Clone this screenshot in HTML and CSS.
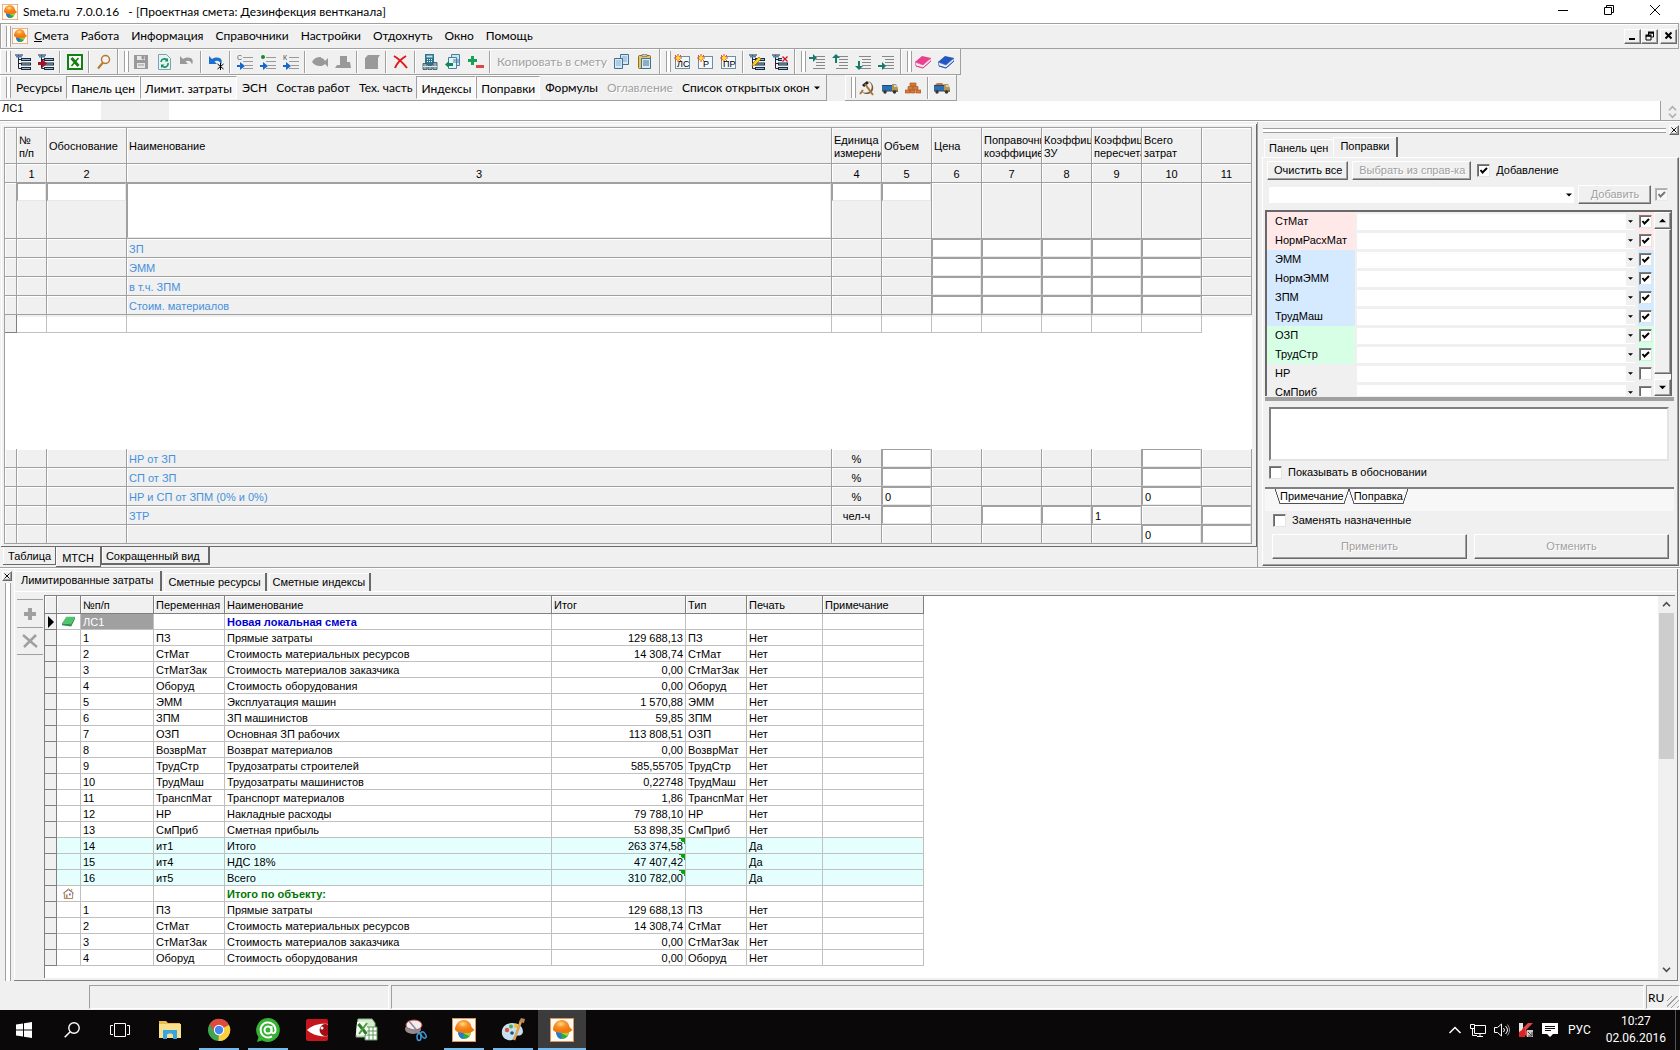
FILE: index.html
```html
<!DOCTYPE html>
<html lang="ru">
<head>
    <meta charset="UTF-8">
    <meta name="viewport" content="width=device-width, initial-scale=1.0">
    <title>Smeta.ru 7.0.0.16 - [Проектная смета: Дезинфекция вентканала]</title>
    <link rel="stylesheet" href="styles.css">
</head>
<body>
    <!-- Icon sprite -->
    <svg class="sprite" aria-hidden="true">
        <defs>
            <radialGradient id="helmet" cx="40%" cy="30%"><stop offset="0" stop-color="#ffe08a"/><stop offset=".5" stop-color="#f9932a"/><stop offset="1" stop-color="#f07a10"/></radialGradient>
        </defs>
        <symbol id="i-logo" viewBox="0 0 24 24"><rect x=".5" y=".5" width="23" height="23" fill="#fffaf4" stroke="#e0935a"/><path d="M6 13h13c0 5-3 8-7 8s-6-3-6-8z" fill="#2fa84a"/><path d="M6 13h6l-1 8c-3-1-5-4-5-8z" fill="#2678d8"/><path d="M11 15l8-1c0 2-1 3-2 4z" fill="#a8d233"/><path d="M3 12C3 6 7 2 12 2c4 0 7 3 7.500 7l3 3c-3 3-6 3-9 3-4 0-8 0-10.500-3z" fill="url(#helmet)"/></symbol>
        <symbol id="i-tree" viewBox="0 0 16 16"><path d="M0 1h8M3.500 1v13.500M3.500 5.500H7M3.500 9.500H7M3.500 14.500H7" stroke="#223" fill="none"/><path d="M1 1.500h6v2H1z" fill="#4a86b8"/><path d="M6 4h10v3H6zM6 8.500h10v3H6zM6 13h10v3H6z" fill="#1a2a38"/><path d="M7 5.500h8M7 10h8M7 14.500h8" stroke="#8fbbd8"/></symbol>
        <symbol id="i-arrow-red" viewBox="0 0 16 16"><path d="M0 8h4V5l5 4.500L4 14v-3H0z" fill="#a80f2a"/></symbol>
        <symbol id="i-pencil" viewBox="0 0 16 16"><path d="M3 12l1-3 6-6 2 2-6 6z" fill="#ffd21f" stroke="#a06a00" stroke-width=".7"/></symbol>
        <symbol id="i-cross" viewBox="0 0 16 16"><path d="M10 2h6v6h-6z" fill="#f0f0f0"/><path d="M10.500 2.500l5 5M15.500 2.500l-5 5" stroke="#d01020" stroke-width="1.300"/></symbol>
        <symbol id="i-excel" viewBox="0 0 16 16"><rect x="1" y="1" width="14" height="14" fill="#fff" stroke="#128012" stroke-width="2"/><path d="M4.500 4l7 8" stroke="#128012" stroke-width="3"/><path d="M11.500 4l-7 8" stroke="#128012" stroke-width="1.600"/></symbol>
        <symbol id="i-find" viewBox="0 0 16 16"><circle cx="9.500" cy="5.500" r="4" fill="#f3f3f3" stroke="#b5782c" stroke-width="1.500"/><path d="M7 8.500l-5 6" stroke="#b5782c" stroke-width="2"/></symbol>
        <symbol id="i-save" viewBox="0 0 16 16"><path d="M1 1h14v14H1z" fill="#999"/><path d="M4 2h8v4H4zM4 9h8v5H4z" fill="#e6e6e6"/><path d="M9 2h2v3H9zM5 11h6" fill="#999" stroke="#999"/></symbol>
        <symbol id="i-refresh" viewBox="0 0 16 16"><path d="M2.500.5h8l4 4v11h-12z" fill="#e6f2f6" stroke="#7da1ae"/><path d="M5 8a3.500 3.500 0 0 1 6-2M12 9a3.500 3.500 0 0 1-6 3" stroke="#139454" stroke-width="1.600" fill="none"/><path d="M12 4v3.500H8.500zM5 14v-3.500h3.500z" fill="#139454"/></symbol>
        <symbol id="i-undo" viewBox="0 0 16 16"><path d="M1 2v8h8L6.500 7.500C9 6 12 6.500 13 10.500c3-6-3-9-9-5.500z" fill="currentColor"/></symbol>
        <symbol id="i-lines" viewBox="0 0 16 16"><path d="M6 3.500h10M6 7.500h10M8 11.500h8M6 14.500h10" stroke="#999"/><path d="M0 11h3V8l5 4-5 4v-3H0z" fill="#1766c9"/></symbol>
        <symbol id="i-fish" viewBox="0 0 16 16"><path d="M0 8c2-4 5-5 9-5v1c2 0 3 1 4 3l3-3v9l-3-3c-2 3-10 3-13-2z" fill="#999"/></symbol>
        <symbol id="i-hat" viewBox="0 0 16 16"><path d="M5 2h7v6h3l1 6H0l2-3h3z" fill="#999"/></symbol>
        <symbol id="i-scroll" viewBox="0 0 16 16"><path d="M4 1h12l-2 3v11H1V4z" fill="#999"/></symbol>
        <symbol id="i-delete" viewBox="0 0 16 16"><path d="M1 2c5 3 9 7 13 12M13 2C8 5 4 9 2 14" stroke="#e01818" stroke-width="2" fill="none"/></symbol>
        <symbol id="i-calc" viewBox="0 0 16 16"><path d="M3 0h9v11H3z" fill="#2f7590"/><path d="M4.500 1.500h6v2h-6z" fill="#bfe3ea"/><path d="M5 5.500h1M7 5.500h1M9 5.500h1M5 7.500h1M7 7.500h1M9 7.500h1" stroke="#fff"/><path d="M1 9.500h4v6H1zM6 11.500h4v4H6zM11 8.500h4v7h-4z" fill="#8fa9b4" stroke="#33505c" stroke-width=".8"/><path d="M1 12.500h14" stroke="#dce9ee"/></symbol>
        <symbol id="i-pages" viewBox="0 0 16 16"><path d="M6.500.5h8v11h-8z" fill="#cfe4f2" stroke="#4b7fa0"/><path d="M3.500 3.500h8v11h-8z" fill="#e4f2fa" stroke="#4b7fa0"/><path d="M8 6h6M8 8h6" stroke="#4b7fa0"/><path d="M0 10.500L4 7v2h4v3H4v2z" fill="#12845a"/></symbol>
        <symbol id="i-plusminus" viewBox="0 0 16 16"><path d="M3 2h3v3h3v3H6v3H3V8H0V5h3z" fill="#17a05a"/><path d="M8 11h8v3H8z" fill="#d84848"/></symbol>
        <symbol id="i-copy" viewBox="0 0 16 16"><path d="M6.500.5h8v10h-8z" fill="#d5eaf8" stroke="#41718f"/><path d="M8 3h5M8 5h5M8 7h5" stroke="#86aec6"/><path d="M.5 4.500h8v10h-8z" fill="#d5eaf8" stroke="#41718f"/><path d="M2 7h5M2 9h5M2 11h5" stroke="#86aec6"/></symbol>
        <symbol id="i-paste" viewBox="0 0 16 16"><rect x="1.500" y="1.500" width="12" height="13" rx="1" fill="#e8c561" stroke="#8a6f25"/><path d="M5 .5h5v2H5z" fill="#ccc" stroke="#666" stroke-width=".6"/><path d="M4.500 4.500h9v10h-9z" fill="#dbeaf2" stroke="#41718f"/><path d="M6 7h6M6 9h6M6 11h6" stroke="#41718f"/></symbol>
        <symbol id="i-new" viewBox="0 0 16 16"><rect x="1.500" y="2.500" width="14" height="12" fill="#f4f8fb" stroke="#6f8ea3"/><path d="M4 0v8M0 4h8M1 1l6 6M7 1L1 7" stroke="#f03c1a"/><circle cx="4" cy="4" r="2" fill="#ffe21f"/></symbol>
        <symbol id="i-rows" viewBox="0 0 16 16"><path d="M4 2.500h12M7 5.500h9M7 8.500h9M7 11.500h9M4 14.500h12" stroke="#888"/></symbol>
        <symbol id="i-book" viewBox="0 0 16 16"><path d="M0 8l7-6 9 2-8 7z" fill="currentColor"/><path d="M0 8l8 3 8-7v3l-8 7-7-2z" fill="#eee" stroke="currentColor" stroke-width=".7"/><path d="M1 12l7 2 8-7" stroke="currentColor" fill="none"/></symbol>
        <symbol id="i-sickle" viewBox="0 0 16 16"><path d="M9 1c7 2 7 12 0 13-3 .5-5-1-6-2 3 1 6 1 8-1 3-3 2-8-2-10z" fill="#7b5a3a"/><path d="M3 5l5-4 2 2-5 4z" fill="#222"/><path d="M6 4l8 11M4 10l-3 4" stroke="#a9733a" stroke-width="2"/></symbol>
        <symbol id="i-truck" viewBox="0 0 16 16"><path d="M0 6h10v5H0z" fill="#2b6fb5"/><path d="M0 5h10v1H0z" fill="#174a80"/><path d="M10 4h4l2 4v4h-6z" fill="#b8954c"/><path d="M12 5h2l1 2h-3z" fill="#b9def2"/><path d="M0 11h16" stroke="#444"/><circle cx="3" cy="12" r="1.700" fill="#333"/><circle cx="12.500" cy="12" r="1.700" fill="#333"/></symbol>
        <symbol id="i-bricks" viewBox="0 0 16 16"><path d="M5 3h6v3H5zM3 6.500h4.500v3H3zM8 6.500h5v3H8zM0 10h5v3H0zM5.500 10H10v3H5.500zM11 10h5v3h-5z" fill="#dc7a35" stroke="#a04b18" stroke-width=".6"/></symbol>
        <symbol id="i-plus" viewBox="0 0 16 16"><path d="M6 2h4v4h4v4h-4v4H6v-4H2V6h4z" fill="#a0a0a0"/></symbol>
        <symbol id="i-x" viewBox="0 0 16 16"><path d="M1 2l14 12M14 2L2 14" stroke="#a0a0a0" stroke-width="2.500"/></symbol>
        <symbol id="i-close" viewBox="0 0 8 8"><path d="M1.500 1.500l5 5M6.500 1.500l-5 5" stroke="#111"/></symbol>
        <symbol id="i-up" viewBox="0 0 8 8"><path d="M0 6l4-4 4 4z"/></symbol>
        <symbol id="i-down" viewBox="0 0 8 8"><path d="M0 2l4 4 4-4z"/></symbol>
        <symbol id="i-chev-up" viewBox="0 0 10 8"><path d="M1 6l4-4 4 4" fill="none" stroke="currentColor" stroke-width="2"/></symbol>
        <symbol id="i-chev-down" viewBox="0 0 10 8"><path d="M1 2l4 4 4-4" fill="none" stroke="currentColor" stroke-width="2"/></symbol>
        <symbol id="i-house" viewBox="0 0 12 12"><path d="M1.500 5v6.500h9V5L6 2z" fill="#fff" stroke="#9a7a5c"/><path d="M0 6l6-5 6 5M9.500 1v2" fill="none" stroke="#9a7a5c"/><path d="M3 7h2v4H3z" fill="#c98b4f"/><path d="M6.500 6h2v2h-2z" fill="#4c6fd0"/></symbol>
        <symbol id="i-green" viewBox="0 0 12 9"><path d="M4 0h8L8 7 0 6z" fill="#4fc46c"/><path d="M0 6l8 1 4-7v2L8.500 9 0 8z" fill="#2b9147"/></symbol>
    </svg>

    <header class="titlebar">
        <svg class="icon"><use href="#i-logo"/></svg>
        <h1 class="title">Smeta.ru&nbsp; 7.0.0.16&nbsp;&nbsp; - [Проектная смета: Дезинфекция вентканала]</h1>
        <div class="window-buttons">
            <button aria-label="Свернуть"><svg width="10" height="10"><path d="M0 5.500h10" stroke="#000"/></svg></button>
            <button aria-label="Восстановить"><svg width="10" height="10"><path d="M.5 2.500h7v7h-7zM2.500 2V.5h7v7H8" fill="none" stroke="#000"/></svg></button>
            <button aria-label="Закрыть"><svg width="10" height="10"><path d="M0 0l10 10M10 0L0 10" stroke="#000"/></svg></button>
        </div>
    </header>

    <nav class="menubar">
        <span class="grip"></span>
        <svg class="icon"><use href="#i-logo"/></svg>
        <button><u>С</u>мета</button>
        <button>Работа</button>
        <button>Информация</button>
        <button>Справочники</button>
        <button>Настройки</button>
        <button>Отдохнуть</button>
        <button>Окно</button>
        <button>Помощь</button>
        <div class="mdi-buttons">
            <button aria-label="Свернуть окно"><svg width="10" height="10"><path d="M1 8h6" stroke="#000" stroke-width="2"/></svg></button>
            <button aria-label="Восстановить окно"><svg width="10" height="10"><path d="M1 5h5v4H1zM3.500 4V2h5v4H6.500" fill="none" stroke="#000"/><path d="M3 1.500h6M0.500 4.500h6" stroke="#000" stroke-width="2"/></svg></button>
            <button class="mdi-close" aria-label="Закрыть окно"><svg width="10" height="10"><path d="M1.500 1.500l6 6M7.500 1.500l-6 6" stroke="#000" stroke-width="2"/></svg></button>
        </div>
    </nav>

    <div class="toolbar-row">
        <div class="toolbar">
            <span class="grip"></span>
            <button class="tool" aria-label="Структура"><svg class="icon"><use href="#i-tree"/></svg></button>
            <button class="tool" aria-label="Перейти"><svg class="icon"><use href="#i-tree"/><use href="#i-arrow-red"/></svg></button>
            <span class="sep"></span>
            <button class="tool" aria-label="Excel"><svg class="icon"><use href="#i-excel"/></svg></button>
            <span class="sep"></span>
            <button class="tool" aria-label="Найти"><svg class="icon"><use href="#i-find"/></svg></button>
        </div>
        <div class="toolbar">
            <span class="grip"></span>
            <button class="tool" aria-label="Сохранить" disabled><svg class="icon"><use href="#i-save"/></svg></button>
            <button class="tool" aria-label="Обновить"><svg class="icon"><use href="#i-refresh"/></svg></button>
            <button class="tool grey" aria-label="Отменить" disabled><svg class="icon"><use href="#i-undo"/></svg></button>
            <span class="sep"></span>
            <button class="tool blue" aria-label="Журнал отмены"><svg class="icon"><use href="#i-undo"/><path d="M12.500 9v7M9.500 10l6 5M15.500 10l-6 5" stroke="#000"/></svg></button>
            <span class="sep"></span>
            <button class="tool" aria-label="Строка С"><svg class="icon"><use href="#i-lines"/><text x="0" y="6">C</text></svg></button>
            <button class="tool" aria-label="Новая строка"><svg class="icon"><use href="#i-lines"/><circle cx="3" cy="3" r="2" fill="#178a2e"/></svg></button>
            <button class="tool" aria-label="Строка К"><svg class="icon"><use href="#i-lines"/><text x="0" y="6">К</text></svg></button>
            <span class="sep"></span>
            <button class="tool" aria-label="Материалы" disabled><svg class="icon"><use href="#i-fish"/></svg></button>
            <button class="tool" aria-label="Машины" disabled><svg class="icon"><use href="#i-hat"/></svg></button>
            <span class="sep"></span>
            <button class="tool" aria-label="Документ" disabled><svg class="icon"><use href="#i-scroll"/></svg></button>
            <span class="sep"></span>
            <button class="tool" aria-label="Удалить"><svg class="icon"><use href="#i-delete"/></svg></button>
            <span class="sep"></span>
            <button class="tool" aria-label="Расчет"><svg class="icon"><use href="#i-calc"/></svg></button>
            <button class="tool" aria-label="Вставить строки"><svg class="icon"><use href="#i-pages"/></svg></button>
            <button class="tool" aria-label="Плюс минус"><svg class="icon"><use href="#i-plusminus"/></svg></button>
            <span class="sep"></span>
            <button class="text-tool" disabled>Копировать в смету</button>
            <button class="tool" aria-label="Копировать"><svg class="icon"><use href="#i-copy"/></svg></button>
            <button class="tool" aria-label="Вставить"><svg class="icon"><use href="#i-paste"/></svg></button>
        </div>
        <div class="toolbar">
            <span class="grip"></span>
            <button class="tool letters" aria-label="Новая локальная смета"><svg class="icon"><use href="#i-new"/><text x="3" y="13">ЛС</text></svg></button>
            <button class="tool letters" aria-label="Новый раздел"><svg class="icon"><use href="#i-new"/><text x="6" y="13">Р</text></svg></button>
            <button class="tool letters" aria-label="Новый подраздел"><svg class="icon"><use href="#i-new"/><text x="3" y="13">ПР</text></svg></button>
            <span class="sep"></span>
            <button class="tool" aria-label="Изменить"><svg class="icon"><use href="#i-tree"/><use href="#i-pencil"/></svg></button>
            <button class="tool" aria-label="Удалить раздел"><svg class="icon"><use href="#i-tree"/><use href="#i-cross"/></svg></button>
        </div>
        <div class="toolbar">
            <span class="grip"></span>
            <button class="tool" aria-label="Вправо вверх"><svg class="icon"><use href="#i-rows"/><path d="M0 3h4V0l4 4-4 4V5H0z" fill="#187a6c"/></svg></button>
            <button class="tool" aria-label="Вверх"><svg class="icon"><use href="#i-rows"/><path d="M0 4l4-4 4 4H5v5H3V4z" fill="#187a6c"/></svg></button>
            <button class="tool" aria-label="Вниз"><svg class="icon"><use href="#i-rows"/><path d="M0 12l4 4 4-4H5V7H3v5z" fill="#187a6c"/></svg></button>
            <button class="tool" aria-label="Вправо вниз"><svg class="icon"><use href="#i-rows"/><path d="M0 11h4V8l4 4-4 4v-3H0z" fill="#187a6c"/></svg></button>
        </div>
        <div class="toolbar">
            <span class="grip"></span>
            <button class="tool pink" aria-label="Справочник"><svg class="icon"><use href="#i-book"/></svg></button>
            <button class="tool navy" aria-label="База"><svg class="icon"><use href="#i-book"/></svg></button>
        </div>
    </div>

    <div class="toolbar-row">
        <div class="toolbar labels">
            <span class="grip"></span>
            <button class="text-tool">Ресурсы</button>
            <button class="text-tool pressed">Панель цен</button>
            <button class="text-tool pressed">Лимит. затраты</button>
            <button class="text-tool">ЭСН</button>
            <button class="text-tool">Состав работ</button>
            <button class="text-tool">Тех. часть</button>
            <button class="text-tool pressed">Индексы</button>
            <button class="text-tool pressed">Поправки</button>
            <button class="text-tool">Формулы</button>
            <button class="text-tool" disabled>Оглавление</button>
            <button class="text-tool">Список открытых окон <svg class="caret"><use href="#i-down"/></svg></button>
        </div>
        <div class="toolbar second">
            <span class="grip"></span>
            <button class="tool" aria-label="Труд"><svg class="icon"><use href="#i-sickle"/></svg></button>
            <button class="tool" aria-label="Машины и механизмы"><svg class="icon"><use href="#i-truck"/></svg></button>
            <button class="tool" aria-label="Материалы"><svg class="icon"><use href="#i-bricks"/></svg></button>
            <span class="sep"></span>
            <button class="tool" aria-label="Перевозка"><svg class="icon"><use href="#i-truck"/><path d="M1 5l2-2h5l2 2z" fill="#d2722f"/></svg></button>
        </div>
    </div>

    <div class="formula">
        <input class="cell-name" type="text" value="ЛС1" aria-label="Позиция">
        <span class="formula-gap"></span>
        <input class="cell-text" type="text" aria-label="Содержимое">
        <div class="spin"><svg><use href="#i-chev-up"/></svg><svg><use href="#i-chev-down"/></svg></div>
    </div>

    <main class="upper">
        <section class="estimate">
            <div class="sheet">
                <table class="form">
                    <colgroup>
                        <col class="w12"><col class="w30"><col class="w80"><col><col class="w50"><col class="w50"><col class="w50"><col class="w60"><col class="w50"><col class="w50"><col class="w60"><col class="w50">
                    </colgroup>
                    <thead>
                        <tr class="heads"><th></th><th>№<br>п/п</th><th>Обоснование</th><th>Наименование</th><th>Единица<br>измерения</th><th>Объем</th><th>Цена</th><th>Поправочный<br>коэффициент</th><th>Коэффициент<br>ЗУ</th><th>Коэффициент<br>пересчета</th><th>Всего<br>затрат</th><th></th></tr>
                        <tr class="numbers"><th></th><th>1</th><th>2</th><th>3</th><th>4</th><th>5</th><th>6</th><th>7</th><th>8</th><th>9</th><th>10</th><th>11</th></tr>
                    </thead>
                    <tbody>
                        <tr class="tall">
                            <td></td>
                            <td class="edit"><input type="text" aria-label="Номер"></td>
                            <td class="edit"><input type="text" aria-label="Обоснование"></td>
                            <td class="edit"><textarea aria-label="Наименование"></textarea></td>
                            <td class="edit"><input type="text" aria-label="Единица измерения"></td>
                            <td class="edit"><input type="text" aria-label="Объем"></td>
                            <td></td><td></td><td></td><td></td><td></td><td></td>
                        </tr>
                        <tr><td></td><td></td><td></td><td class="name">ЗП</td><td></td><td></td><td class="edit"><input type="text" aria-label="ЗП цена"></td><td class="edit"><input type="text" aria-label="ЗП поправка"></td><td class="edit"><input type="text" aria-label="ЗП ЗУ"></td><td class="edit"><input type="text" aria-label="ЗП пересчет"></td><td class="edit"><input type="text" aria-label="ЗП всего"></td><td></td></tr>
                        <tr><td></td><td></td><td></td><td class="name">ЭММ</td><td></td><td></td><td class="edit"><input type="text" aria-label="ЭММ цена"></td><td class="edit"><input type="text" aria-label="ЭММ поправка"></td><td class="edit"><input type="text" aria-label="ЭММ ЗУ"></td><td class="edit"><input type="text" aria-label="ЭММ пересчет"></td><td class="edit"><input type="text" aria-label="ЭММ всего"></td><td></td></tr>
                        <tr><td></td><td></td><td></td><td class="name">в т.ч. ЗПМ</td><td></td><td></td><td class="edit"><input type="text" aria-label="ЗПМ цена"></td><td class="edit"><input type="text" aria-label="ЗПМ поправка"></td><td class="edit"><input type="text" aria-label="ЗПМ ЗУ"></td><td class="edit"><input type="text" aria-label="ЗПМ пересчет"></td><td class="edit"><input type="text" aria-label="ЗПМ всего"></td><td></td></tr>
                        <tr><td></td><td></td><td></td><td class="name">Стоим. материалов</td><td></td><td></td><td class="edit"><input type="text" aria-label="Материалы цена"></td><td class="edit"><input type="text" aria-label="Материалы поправка"></td><td class="edit"><input type="text" aria-label="Материалы ЗУ"></td><td class="edit"><input type="text" aria-label="Материалы пересчет"></td><td class="edit"><input type="text" aria-label="Материалы всего"></td><td></td></tr>
                        <tr class="blank"><td></td><td></td><td></td><td></td><td></td><td></td><td></td><td></td><td></td><td></td><td></td><td></td></tr>
                    </tbody>
                </table>
                <div class="empty"></div>
                <table class="form totals">
                    <colgroup>
                        <col class="w12"><col class="w30"><col class="w80"><col><col class="w50"><col class="w50"><col class="w50"><col class="w60"><col class="w50"><col class="w50"><col class="w60"><col class="w50">
                    </colgroup>
                    <tbody>
                        <tr><td></td><td></td><td></td><td class="name">НР от ЗП</td><td class="unit">%</td><td class="edit"><input type="text" aria-label="НР объем"></td><td></td><td></td><td></td><td></td><td class="edit"><input type="text" aria-label="НР всего"></td><td></td></tr>
                        <tr><td></td><td></td><td></td><td class="name">СП от ЗП</td><td class="unit">%</td><td class="edit"><input type="text" aria-label="СП объем"></td><td></td><td></td><td></td><td></td><td class="edit"><input type="text" aria-label="СП всего"></td><td></td></tr>
                        <tr><td></td><td></td><td></td><td class="name">НР и СП от ЗПМ (0% и 0%)</td><td class="unit">%</td><td class="edit"><input type="text" value="0" aria-label="НР и СП объем"></td><td></td><td></td><td></td><td></td><td class="edit"><input type="text" value="0" aria-label="НР и СП всего"></td><td></td></tr>
                        <tr><td></td><td></td><td></td><td class="name">ЗТР</td><td class="unit">чел-ч</td><td class="edit"><input type="text" aria-label="ЗТР объем"></td><td></td><td class="edit"><input type="text" aria-label="ЗТР поправка"></td><td class="edit"><input type="text" aria-label="ЗТР ЗУ"></td><td class="edit"><input type="text" value="1" aria-label="ЗТР пересчет"></td><td></td><td class="edit"><input type="text" aria-label="ЗТР итог"></td></tr>
                        <tr><td></td><td></td><td></td><td class="name"></td><td></td><td></td><td></td><td></td><td></td><td></td><td class="edit"><input type="text" value="0" aria-label="Итого всего"></td><td class="edit"><input type="text" aria-label="Итого"></td></tr>
                    </tbody>
                </table>
            </div>
            <div class="sheet-tabs">
                <button>Таблица</button>
                <button class="active">МТСН</button>
                <button>Сокращенный вид</button>
            </div>
        </section>

        <aside class="corrections">
            <div class="dock-head"><span class="dock-grip"></span><button class="mini-close" aria-label="Закрыть панель"><svg><use href="#i-close"/></svg></button></div>
            <div class="tabs">
                <button>Панель цен</button>
                <button class="active">Поправки</button>
            </div>
            <div class="panel">
                <div class="line">
                    <button class="btn">Очистить все</button>
                    <button class="btn" disabled>Выбрать из справ-ка</button>
                    <label class="check"><input type="checkbox" checked>Добавление</label>
                </div>
                <div class="line add-line">
                    <span class="combo"><select aria-label="Поправка"><option></option></select><svg><use href="#i-down"/></svg></span>
                    <button class="btn" disabled>Добавить</button>
                    <input type="checkbox" checked disabled aria-label="Добавление включено">
                </div>
                <div class="factor-box">
                    <div class="factors">
                        <div class="factor red"><label for="f1">СтМат</label><span class="combo"><select id="f1"><option></option></select><svg><use href="#i-down"/></svg></span><input type="checkbox" checked aria-label="СтМат вкл"></div>
                        <div class="factor red"><label for="f2">НормРасхМат</label><span class="combo"><select id="f2"><option></option></select><svg><use href="#i-down"/></svg></span><input type="checkbox" checked aria-label="НормРасхМат вкл"></div>
                        <div class="factor sky"><label for="f3">ЭММ</label><span class="combo"><select id="f3"><option></option></select><svg><use href="#i-down"/></svg></span><input type="checkbox" checked aria-label="ЭММ вкл"></div>
                        <div class="factor sky"><label for="f4">НормЭММ</label><span class="combo"><select id="f4"><option></option></select><svg><use href="#i-down"/></svg></span><input type="checkbox" checked aria-label="НормЭММ вкл"></div>
                        <div class="factor sky"><label for="f5">ЗПМ</label><span class="combo"><select id="f5"><option></option></select><svg><use href="#i-down"/></svg></span><input type="checkbox" checked aria-label="ЗПМ вкл"></div>
                        <div class="factor sky"><label for="f6">ТрудМаш</label><span class="combo"><select id="f6"><option></option></select><svg><use href="#i-down"/></svg></span><input type="checkbox" checked aria-label="ТрудМаш вкл"></div>
                        <div class="factor mint"><label for="f7">ОЗП</label><span class="combo"><select id="f7"><option></option></select><svg><use href="#i-down"/></svg></span><input type="checkbox" checked aria-label="ОЗП вкл"></div>
                        <div class="factor mint"><label for="f8">ТрудСтр</label><span class="combo"><select id="f8"><option></option></select><svg><use href="#i-down"/></svg></span><input type="checkbox" checked aria-label="ТрудСтр вкл"></div>
                        <div class="factor"><label for="f9">НР</label><span class="combo"><select id="f9"><option></option></select><svg><use href="#i-down"/></svg></span><input type="checkbox" aria-label="НР вкл"></div>
                        <div class="factor"><label for="f10">СмПриб</label><span class="combo"><select id="f10"><option></option></select><svg><use href="#i-down"/></svg></span><input type="checkbox" aria-label="СмПриб вкл"></div>
                    </div>
                    <div class="classic-scroll">
                        <button aria-label="Вверх по списку"><svg><use href="#i-up"/></svg></button>
                        <span class="thumb"></span>
                        <button aria-label="Вниз по списку"><svg><use href="#i-down"/></svg></button>
                    </div>
                </div>
                <div class="splitter"></div>
                <textarea class="note" aria-label="Примечание"></textarea>
                <label class="check show-check"><input type="checkbox">Показывать в обосновании</label>
                <div class="slant-tabs">
                    <button class="active">Примечание</button>
                    <button>Поправка</button>
                </div>
                <label class="check replace-check"><input type="checkbox">Заменять назначенные</label>
                <div class="apply">
                    <button class="btn" disabled>Применить</button>
                    <button class="btn" disabled>Отменить</button>
                </div>
            </div>
        </aside>
    </main>

    <section class="lower">
        <div class="dock-side"><button class="mini-close" aria-label="Закрыть нижнюю панель"><svg><use href="#i-close"/></svg></button><span class="side-grip"></span></div>
        <div class="limits">
            <div class="tabs">
                <button class="active">Лимитированные затраты</button>
                <button>Сметные ресурсы</button>
                <button>Сметные индексы</button>
            </div>
            <div class="limits-body">
                <div class="side-tools">
                    <button aria-label="Добавить строку" disabled><svg class="icon"><use href="#i-plus"/></svg></button>
                    <button aria-label="Удалить строку" disabled><svg class="icon"><use href="#i-x"/></svg></button>
                </div>
                <div class="grid-area">
                    <table class="grid">
                        <colgroup><col class="w12"><col class="w24"><col class="w73"><col class="w71"><col class="w327"><col class="w134"><col class="w61"><col class="w76"><col class="w101"></colgroup>
                        <thead>
                            <tr><th></th><th></th><th>№п/п</th><th>Переменная</th><th>Наименование</th><th>Итог</th><th>Тип</th><th>Печать</th><th>Примечание</th></tr>
                        </thead>
                        <tbody>
                            <tr class="group"><td><svg class="current"><path d="M1 0l6 6-6 6z"/></svg></td><td class="mark"><svg><use href="#i-green"/></svg></td><td class="selected">ЛС1</td><td></td><td class="blue-text">Новая локальная смета</td><td></td><td></td><td></td><td></td></tr>
                            <tr><td></td><td></td><td>1</td><td>ПЗ</td><td>Прямые затраты</td><td>129 688,13</td><td>ПЗ</td><td>Нет</td><td></td></tr>
                            <tr><td></td><td></td><td>2</td><td>СтМат</td><td>Стоимость материальных ресурсов</td><td>14 308,74</td><td>СтМат</td><td>Нет</td><td></td></tr>
                            <tr><td></td><td></td><td>3</td><td>СтМатЗак</td><td>Стоимость материалов заказчика</td><td>0,00</td><td>СтМатЗак</td><td>Нет</td><td></td></tr>
                            <tr><td></td><td></td><td>4</td><td>Оборуд</td><td>Стоимость оборудования</td><td>0,00</td><td>Оборуд</td><td>Нет</td><td></td></tr>
                            <tr><td></td><td></td><td>5</td><td>ЭММ</td><td>Эксплуатация машин</td><td>1 570,88</td><td>ЭММ</td><td>Нет</td><td></td></tr>
                            <tr><td></td><td></td><td>6</td><td>ЗПМ</td><td>ЗП машинистов</td><td>59,85</td><td>ЗПМ</td><td>Нет</td><td></td></tr>
                            <tr><td></td><td></td><td>7</td><td>ОЗП</td><td>Основная ЗП рабочих</td><td>113 808,51</td><td>ОЗП</td><td>Нет</td><td></td></tr>
                            <tr><td></td><td></td><td>8</td><td>ВозврМат</td><td>Возврат материалов</td><td>0,00</td><td>ВозврМат</td><td>Нет</td><td></td></tr>
                            <tr><td></td><td></td><td>9</td><td>ТрудСтр</td><td>Трудозатраты строителей</td><td>585,55705</td><td>ТрудСтр</td><td>Нет</td><td></td></tr>
                            <tr><td></td><td></td><td>10</td><td>ТрудМаш</td><td>Трудозатраты машинистов</td><td>0,22748</td><td>ТрудМаш</td><td>Нет</td><td></td></tr>
                            <tr><td></td><td></td><td>11</td><td>ТранспМат</td><td>Транспорт материалов</td><td>1,86</td><td>ТранспМат</td><td>Нет</td><td></td></tr>
                            <tr><td></td><td></td><td>12</td><td>НР</td><td>Накладные расходы</td><td>79 788,10</td><td>НР</td><td>Нет</td><td></td></tr>
                            <tr><td></td><td></td><td>13</td><td>СмПриб</td><td>Сметная прибыль</td><td>53 898,35</td><td>СмПриб</td><td>Нет</td><td></td></tr>
                            <tr class="total"><td></td><td></td><td>14</td><td>ит1</td><td>Итого</td><td>263 374,58</td><td></td><td>Да</td><td></td></tr>
                            <tr class="total"><td></td><td></td><td>15</td><td>ит4</td><td>НДС 18%</td><td>47 407,42</td><td></td><td>Да</td><td></td></tr>
                            <tr class="total"><td></td><td></td><td>16</td><td>ит5</td><td>Всего</td><td>310 782,00</td><td></td><td>Да</td><td></td></tr>
                            <tr class="group"><td></td><td class="mark"><svg><use href="#i-house"/></svg></td><td></td><td></td><td class="green-text">Итого по объекту:</td><td></td><td></td><td></td><td></td></tr>
                            <tr><td></td><td></td><td>1</td><td>ПЗ</td><td>Прямые затраты</td><td>129 688,13</td><td>ПЗ</td><td>Нет</td><td></td></tr>
                            <tr><td></td><td></td><td>2</td><td>СтМат</td><td>Стоимость материальных ресурсов</td><td>14 308,74</td><td>СтМат</td><td>Нет</td><td></td></tr>
                            <tr><td></td><td></td><td>3</td><td>СтМатЗак</td><td>Стоимость материалов заказчика</td><td>0,00</td><td>СтМатЗак</td><td>Нет</td><td></td></tr>
                            <tr><td></td><td></td><td>4</td><td>Оборуд</td><td>Стоимость оборудования</td><td>0,00</td><td>Оборуд</td><td>Нет</td><td></td></tr>
                        </tbody>
                    </table>
                </div>
                <div class="flat-scroll">
                    <button aria-label="Прокрутить вверх"><svg><use href="#i-chev-up"/></svg></button>
                    <span class="track"><span class="thumb"></span></span>
                    <button aria-label="Прокрутить вниз"><svg><use href="#i-chev-down"/></svg></button>
                </div>
            </div>
        </div>
    </section>

    <footer class="status">
        <span class="cell first"></span>
        <span class="cell wide"></span>
        <span class="cell lang">RU</span>
    </footer>

    <div class="taskbar">
        <div class="system">
            <button aria-label="Пуск"><svg width="16" height="16"><path d="M0 2.500L7 1.500V7.500H0zM8 1.300L16 0V7.500H8zM0 8.500h7v6L0 13.500zM8 8.500h8V16l-8-1.200z" fill="#fff"/></svg></button>
            <button aria-label="Поиск"><svg width="16" height="16"><circle cx="10" cy="6" r="5.200" fill="none" stroke="#fff" stroke-width="1.400"/><path d="M6.200 9.800L.7 15.300" stroke="#fff" stroke-width="1.600"/></svg></button>
            <button aria-label="Представление задач"><svg width="20" height="14"><path d="M4.500 .5h11v13h-11zM3 2.500H.5v9H3M17 2.500h2.500v9H17" fill="none" stroke="#fff"/></svg></button>
        </div>
        <div class="apps">
            <button aria-label="Проводник"><svg width="24" height="24" viewBox="0 0 24 24"><path d="M1 3h7l2 2h12v15H1z" fill="#e9bc4c"/><path d="M1 6h22v14H1z" fill="#fbe08b"/><path d="M5 12h14v9h-4v-4c0-2-6-2-6 0v4H5z" fill="#35a5e4"/></svg></button>
            <button class="open" aria-label="Chrome"><svg width="24" height="24" viewBox="0 0 24 24"><circle cx="12" cy="12" r="11" fill="#3fa551"/><path d="M12 12L2.500 6.500A11 11 0 0 1 22 7z" fill="#dc4b3e"/><path d="M12 12l10-5a11 11 0 0 1-10.500 16z" fill="#fccf41"/><path d="M2.500 6.500L8 15l4-3z" fill="#dc4b3e"/><circle cx="12" cy="12" r="5.200" fill="#fff"/><circle cx="12" cy="12" r="4.200" fill="#4688f1"/></svg></button>
            <button class="open" aria-label="Агент"><svg width="24" height="24" viewBox="0 0 24 24"><path d="M12 0a12 12 0 1 1-6 22.500L1 24l1.500-5A12 12 0 0 1 12 0z" fill="#35b233"/><circle cx="12" cy="12" r="3.500" fill="none" stroke="#fff" stroke-width="2"/><path d="M15.500 8v5c0 3 4 3 4-1a7.500 7.500 0 1 0-3.500 6.300" fill="none" stroke="#fff" stroke-width="2"/></svg></button>
            <button aria-label="Просмотр"><svg width="22" height="22" viewBox="0 0 22 22"><rect width="22" height="22" rx="2" fill="#c5161d"/><path d="M1 11C7 6 13 4 22 5v12c-9 1-15-1-21-6z" fill="#fff"/><path d="M22 5.500a6 6 0 1 0 0 11z" fill="#a40d14"/><circle cx="16" cy="9" r="1.500" fill="#fff"/></svg></button>
            <button aria-label="Excel"><svg width="24" height="24" viewBox="0 0 24 24"><path d="M4 1h14l3 4v14H2z" fill="#d5ecce" stroke="#84b884"/><path d="M11 9h12v13H11z" fill="#fff" stroke="#5d995d"/><path d="M11 13h12M11 17h12M15 9v13M19 9v13" stroke="#5d995d"/><path d="M3 4h10v13H2z" fill="#f4fbf2"/><path d="M4.500 6l8 10" stroke="#2f7d2f" stroke-width="3"/><path d="M13 5L5 16" stroke="#4f9c3f" stroke-width="2"/></svg></button>
            <button aria-label="Ножницы"><svg width="24" height="24" viewBox="0 0 24 24"><ellipse cx="10" cy="11" rx="8" ry="5" fill="#9b8d8d"/><ellipse cx="11" cy="7" rx="8" ry="5" fill="#eee" stroke="#d0404a"/><path d="M6 3l10 12M4 10l13 5" stroke="#889" stroke-width="1.500"/><ellipse cx="16" cy="19" rx="2" ry="3.500" fill="none" stroke="#3f97d3" stroke-width="1.500"/><ellipse cx="20.500" cy="17" rx="2" ry="3.500" fill="none" stroke="#3f97d3" stroke-width="1.500" transform="rotate(-35 20.500 17)"/></svg></button>
            <button class="open" aria-label="Smeta.ru"><svg width="24" height="24"><use href="#i-logo"/></svg></button>
            <button class="open" aria-label="Paint"><svg width="26" height="26" viewBox="0 0 26 26"><path d="M12 6C5 6 1 11 2 17c1 5 6 7 10 6 3-1 1-3 3-4s7 1 8-4c0-6-5-9-11-9z" fill="#c5e0ee"/><circle cx="7" cy="13" r="2.200" fill="#df4e49"/><circle cx="11" cy="9.500" r="2" fill="#4bac53"/><circle cx="16" cy="9" r="2" fill="#f0bc31"/><circle cx="12" cy="16" r="1.800" fill="#234d80"/><path d="M21 4l-7 19" stroke="#e0a155" stroke-width="2.500"/><path d="M19 5l2-4 4 1-1 4z" fill="#b98950"/></svg></button>
            <button class="open current-app" aria-label="Smeta.ru проект"><svg width="24" height="24"><use href="#i-logo"/></svg></button>
        </div>
        <div class="tray">
            <svg width="14" height="16"><path d="M1.500 11L7 5.500l5.500 5.500" fill="none" stroke="#fff" stroke-width="1.500"/></svg>
            <svg width="16" height="16"><path d="M4.500 3.500h11v8h-11zM7 14.500h6M10 11.500v3M2.500 6v7.500H7M.5 2.500h4v4h-4z" fill="none" stroke="#fff"/></svg>
            <svg width="16" height="16"><path d="M.5 5.500h3l4-3.500v12l-4-3.500h-3zM9.500 6q2 2 0 4M11.500 4q4 4 0 8" fill="none" stroke="#fff"/><path d="M13.500 2.500q4 5.500 0 11" fill="none" stroke="#999"/></svg>
            <svg width="16" height="16"><path d="M1 1h4v14H1z" fill="#e6e6e6"/><path d="M15 1h-5L4 7v2l5 6h5l-6-7z" fill="#e04848"/><path d="M1 10l6-4v9H1z" fill="#d22"/><path d="M9 8h6v7H9z" fill="#ccc"/><path d="M10 10l4 4M14 10v4h-4" stroke="#444" fill="none"/></svg>
            <svg width="16" height="16"><path d="M0 1h16v11h-5l-3 3-3-3H0z" fill="#fff"/><path d="M3 4.500h10M3 6.500h10M3 8.500h6" stroke="#111"/></svg>
            <span class="layout">РУС</span>
            <div class="clock"><span>10:27</span><span>02.06.2016</span></div>
            <span class="peek"></span>
        </div>
    </div>
</body>
</html>
```
FILE: styles.css
```css
* {
    box-sizing: border-box;
}
body {
    margin: 0;
    min-height: 100vh;
    display: flex;
    flex-direction: column;
    background-color: #f0f0f0;
    color: #000;
    font: 11px/13px "Liberation Sans", Arial, sans-serif;
}
button, input, select, textarea {
    font: inherit;
    color: inherit;
    margin: 0;
    padding: 0;
    border: 0;
    border-radius: 0;
    background: none;
}
svg {
    display: block;
    flex: none;
}
.sprite {
    position: absolute;
    width: 0;
    height: 0;
}
.icon {
    width: 16px;
    height: 16px;
}

/* Title and menu */
.titlebar {
    height: 23px;
    background: #fff;
    display: flex;
    align-items: center;
    padding-left: 2px;
}
.title {
    margin: 0 0 0 5px;
    flex: 1;
    font: 12px/16px Lato, "Open Sans", sans-serif;
}
.window-buttons {
    display: flex;
    align-self: stretch;
    padding: 0 2px 3px 0;
}
.window-buttons button {
    width: 46px;
    display: flex;
    justify-content: center;
    align-items: center;
}
.menubar {
    height: 26px;
    margin-right: 1px;
    border: 1px solid #a0a0a0;
    box-shadow: inset 1px 1px #fff;
    display: flex;
    align-items: center;
    font: 12px/16px Lato, "Open Sans", sans-serif;
}
.menubar > button {
    padding: 0 6px;
}
.grip {
    width: 5px;
    height: 21px;
    flex: none;
    margin: 0 1px 0 5px;
    border: solid #a0a0a0;
    border-width: 0 1px;
    background: #fff;
}
.mdi-buttons {
    margin-left: auto;
    margin-right: 1px;
    display: flex;
}
.mdi-buttons button, .mini-close, .btn {
    background: #f0f0f0;
    border: 1px solid;
    border-color: #fff #696969 #696969 #fff;
    box-shadow: inset -1px -1px #a0a0a0;
}
.mdi-buttons button {
    width: 17px;
    height: 15px;
    display: flex;
    align-items: center;
    justify-content: center;
}
.mdi-buttons .mdi-close {
    margin-left: 2px;
}

/* Toolbars */
.toolbar-row {
    height: 26px;
    display: flex;
}
.toolbar {
    display: flex;
    align-items: center;
    border: solid #a0a0a0;
    border-width: 0 1px 1px 0;
    box-shadow: inset 1px 1px #fff;
    padding-right: 2px;
    font: 12px/16px Lato, "Open Sans", sans-serif;
}
.toolbar.second {
    margin-left: 18px;
}
.toolbar .grip {
    margin: 0 0 0 6px;
}
.tool {
    width: 23px;
    height: 22px;
    display: flex;
    align-items: center;
    justify-content: center;
}
.tool text {
    font: 7px "Liberation Sans", sans-serif;
    fill: #555;
}
.tool.letters text {
    font: 9px "Liberation Sans", sans-serif;
    fill: #000;
}
.grey { color: #999; }
.blue { color: #1b6fd0; }
.pink { color: #e8408f; }
.navy { color: #2456c0; }
.sep {
    width: 2px;
    height: 22px;
    margin: 0 2px;
    border-left: 1px solid #a0a0a0;
    background: #fff;
}
.text-tool {
    height: 23px;
    padding: 0 4px;
    display: flex;
    align-items: center;
}
.labels .text-tool:not(.pressed) {
    padding: 0 4px 0 5px;
}
.text-tool:disabled, .btn:disabled {
    color: #a0a0a0;
    text-shadow: 1px 1px #fff;
}
.text-tool.pressed {
    padding-top: 2px;
    background: #f8f8f8;
    border: 1px solid;
    border-color: #a0a0a0 #fff #fff #a0a0a0;
}
.caret {
    width: 6px;
    height: 6px;
    margin-left: 4px;
}

/* Formula line */
.formula {
    height: 20px;
    display: flex;
    background: #fff;
    border-bottom: 1px solid #a0a0a0;
}
.cell-name {
    width: 101px;
    padding: 0 2px 4px;
}
.formula-gap {
    width: 68px;
    background: #f0f0f0;
}
.cell-text {
    flex: 1;
}
.spin {
    width: 20px;
    padding: 4px 3px 0 7px;
    background: #f0f0f0;
    border-left: 1px solid #a0a0a0;
    color: #b0b0b0;
}
.spin svg {
    width: 9px;
    height: 7px;
}

/* Upper half */
.upper {
    display: grid;
    grid-template-columns: minmax(0, 1fr) 422px;
    border-bottom: 1px solid #a0a0a0;
    border-top: 1px solid #fff;
}
.estimate {
    display: flex;
    flex-direction: column;
    border-right: 1px solid #a0a0a0;
}
.sheet {
    flex: 1;
    display: flex;
    flex-direction: column;
    margin: 2px 0 0 1px;
    padding: 3px 4px 2px 3px;
    border: solid #696969;
    border-width: 0 1px 1px 0;
    box-shadow: inset 1px 1px #fff;
}
.form {
    width: 100%;
    table-layout: fixed;
    border-collapse: separate;
    border-spacing: 0;
    border: solid #a0a0a0;
    border-width: 1px 0 0 1px;
}
.form.totals {
    border-top: 0;
}
.w12 { width: 12px; }
.w24 { width: 24px; }
.w30 { width: 30px; }
.w50 { width: 50px; }
.w60 { width: 60px; }
.w61 { width: 61px; }
.w71 { width: 71px; }
.w73 { width: 73px; }
.w76 { width: 76px; }
.w80 { width: 80px; }
.w101 { width: 101px; }
.w134 { width: 134px; }
.w327 { width: 327px; }
.form th, .form td {
    height: 19px;
    padding: 2px 2px 0;
    border: solid #a0a0a0;
    border-width: 0 1px 1px 0;
    box-shadow: inset 1px 1px #fff;
    font-weight: normal;
    text-align: left;
    white-space: nowrap;
    overflow: hidden;
}
.form .heads th {
    height: 36px;
}
.form .numbers th {
    text-align: center;
}
.form td.name {
    color: #4590dc;
}
.form td.unit {
    text-align: center;
}
.form .edit {
    padding: 0;
    vertical-align: top;
}
.form .edit input, .form .edit textarea {
    display: block;
    width: 100%;
    height: 18px;
    padding: 2px 2px 0;
    resize: none;
    background: #fff;
    border: 1px solid;
    border-color: #a0a0a0 #e8e8e8 #e8e8e8 #a0a0a0;
}
.form .tall td {
    height: 56px;
}
.form .edit textarea {
    height: 55px;
}
.form .blank td {
    height: 18px;
    background: #fff;
    border-color: #c0c0c0;
    box-shadow: inset 0 2px #f0f0f0;
}
.form .blank td:first-child {
    background: #f0f0f0;
    border-color: #808080;
}
.form .blank td:last-child {
    border: 0;
}
.empty {
    flex: 1;
    min-height: 116px;
    background: #fff;
    border-left: 1px solid #a0a0a0;
}
.sheet-tabs {
    height: 20px;
    display: flex;
    align-items: flex-start;
    padding-left: 3px;
}
.sheet-tabs button {
    height: 18px;
    padding: 2px 4px 0 5px;
    border: solid #696969;
    border-width: 0 1px 1px 0;
    box-shadow: inset 1px 0 #fff;
}
.sheet-tabs .active {
    height: 20px;
    padding: 4px 6px 0;
}
.sheet-tabs button:last-child {
    padding: 2px 8px 0 4px;
    border-width: 0 2px 2px 1px;
}

/* Corrections panel */
.corrections {
    padding: 3px 1px 1px 4px;
    display: flex;
    flex-direction: column;
}
.dock-head {
    display: flex;
    align-items: center;
    gap: 3px;
    padding-left: 1px;
}
.dock-grip {
    flex: 1;
    height: 5px;
    border: solid #a0a0a0;
    border-width: 1px 0;
    background: #fff;
}
.mini-close {
    width: 10px;
    height: 10px;
    display: flex;
    align-items: center;
    justify-content: center;
}
.mini-close svg {
    width: 8px;
    height: 8px;
}
.tabs {
    display: flex;
    align-items: flex-end;
    height: 22px;
}
.tabs button {
    height: 18px;
    padding: 1px 4px 0;
    margin-right: 2px;
    border: solid #696969;
    border-width: 0 2px 0 0;
    box-shadow: inset 1px 1px #fff;
}
.tabs .active {
    height: 20px;
    padding: 0 7px 1px;
    background: #f0f0f0;
}
.corrections .tabs {
    padding-left: 2px;
}
.corrections .tabs button:first-child {
    border-width: 0;
    padding: 1px 5px 0;
    margin: 0;
}
.panel {
    flex: 1;
    display: flex;
    flex-direction: column;
    padding: 3px 4px 6px 2px;
    border: 1px solid;
    border-color: #fff #696969 #696969 #fff;
    box-shadow: inset -1px -1px #a0a0a0;
}
.line {
    display: flex;
    align-items: center;
    gap: 4px;
    padding: 0 2px;
}
.btn {
    height: 19px;
    padding: 0 6px;
}
.line .btn {
    padding: 0 5px 0 6px;
}
.check {
    display: flex;
    align-items: center;
    gap: 6px;
}
.line .check {
    margin-left: 2px;
}
input[type=checkbox] {
    appearance: none;
    flex: none;
    width: 13px;
    height: 13px;
    background: #fff no-repeat center;
    border: 1px solid;
    border-color: #808080 #e3e3e3 #e3e3e3 #808080;
    box-shadow: inset 1px 1px #696969;
}
input[type=checkbox]:checked {
    background-image: url("data:image/svg+xml,%3Csvg xmlns='http://www.w3.org/2000/svg' width='9' height='9'%3E%3Cpath d='M1.500 4l2 2.500L8 2' fill='none' stroke='%23000' stroke-width='2'/%3E%3C/svg%3E");
}
input[type=checkbox]:disabled {
    opacity: .5;
}
.add-line {
    margin-top: 5px;
    padding: 0 6px 0 4px;
}
.add-line .btn {
    width: 73px;
}
.combo {
    flex: 1;
    height: 16px;
    display: flex;
    align-items: center;
    background: #fff;
}
.combo select {
    appearance: none;
    flex: 1;
    min-width: 0;
    height: 100%;
}
.combo svg {
    width: 6px;
    height: 6px;
    margin: 0 2px;
}
.factor-box {
    height: 186px;
    margin: 6px 2px 0 0;
    display: flex;
    overflow: hidden;
    border: solid #696969;
    border-width: 2px 1px 0 2px;
}
.factors {
    flex: 1;
}
.factor {
    height: 19px;
    display: flex;
    align-items: center;
    gap: 2px;
    padding-right: 2px;
    background: linear-gradient(to right, transparent calc(100% - 16px), var(--tint, #f0f0f0) 0);
}
.factor label {
    width: 88px;
    height: 19px;
    padding: 3px 0 0 8px;
    background: var(--tint, #f0f0f0);
}
.factor .combo svg {
    width: 9px;
    height: 15px;
    margin: 0;
    padding: 0 2px;
    background: #f0f0f0;
}
.factor input {
    margin-left: 2px;
}
.red { --tint: #ffe8e8; }
.sky { --tint: #d5e9ff; }
.mint { --tint: #d6ffe6; }
.classic-scroll {
    width: 17px;
    display: flex;
    flex-direction: column;
    background: #f8f8f8;
}
.classic-scroll button, .classic-scroll .thumb {
    height: 17px;
    display: flex;
    align-items: center;
    justify-content: center;
    background: #f0f0f0;
    border: 1px solid;
    border-color: #fff #696969 #696969 #fff;
    box-shadow: inset -1px -1px #a0a0a0;
}
.classic-scroll .thumb {
    flex: 1;
    margin-bottom: 5px;
}
.classic-scroll svg {
    width: 7px;
    height: 7px;
}
.splitter {
    height: 4px;
    margin: 1px 0 6px;
    background: #a0a0a0;
}
.note {
    height: 54px;
    margin: 0 5px 0 4px;
    resize: none;
    background: #fff;
    border: 2px solid;
    border-color: #808080 #e3e3e3 #e3e3e3 #808080;
}
.show-check {
    margin: 5px 0 0 4px;
}
.slant-tabs {
    display: flex;
    height: 24px;
    margin: 8px 0 3px;
    padding-left: 10px;
    border-top: 2px solid #808080;
    background: #f7f7f7;
}
.slant-tabs button {
    height: 15px;
    padding: 0 4px;
    --slope: #505050;
    background:
        linear-gradient(to top right, transparent 46%, var(--slope) 47%, var(--slope) 56%, transparent 57%) left / 5px 100% no-repeat,
        linear-gradient(to top left, transparent 46%, var(--slope) 47%, var(--slope) 56%, transparent 57%) right / 5px 100% no-repeat,
        linear-gradient(var(--slope), var(--slope)) bottom / calc(100% - 10px) 1px no-repeat,
        linear-gradient(#fff, #fff) center / calc(100% - 10px) 100% no-repeat;
}
.slant-tabs button {
    padding: 0 5px;
}
.replace-check {
    margin-left: 8px;
}
.apply {
    display: flex;
    gap: 7px;
    margin: auto 5px 0 7px;
}
.apply .btn {
    flex: 1;
    height: 25px;
}

/* Lower half */
.lower {
    flex: 1;
    display: flex;
    border-top: 1px solid #fff;
}
.dock-side {
    width: 13px;
    padding: 2px 0 2px 2px;
    display: flex;
    flex-direction: column;
    gap: 2px;
}
.side-grip {
    flex: 1;
    width: 6px;
    margin-left: 3px;
    border: solid #a0a0a0;
    border-width: 0 1px;
    background: #fff;
}
.limits {
    flex: 1;
    min-width: 0;
    display: flex;
    flex-direction: column;
    margin: 0 2px 2px 1px;
    border: solid #808080;
    border-width: 0 1px 1px 0;
    box-shadow: inset 1px 0 #fff;
}
.limits-body {
    flex: 1;
    display: flex;
    padding: 3px 2px 2px 3px;
    border-top: 1px solid #fff;
}
.side-tools {
    width: 27px;
    padding-top: 4px;
}
.side-tools button {
    width: 26px;
    height: 28px;
    display: flex;
    align-items: center;
    justify-content: center;
    border-top: 1px solid #a0a0a0;
}
.side-tools button:last-child {
    border-bottom: 1px solid #a0a0a0;
}
.grid-area {
    flex: 1;
    background: #fff;
    border: solid #808080;
    border-width: 1px 0 0 1px;
}
.grid {
    width: 879px;
    table-layout: fixed;
    border-collapse: separate;
    border-spacing: 0;
}
.grid th, .grid td {
    height: 16px;
    padding: 1px 2px 0;
    border: solid #c0c0c0;
    border-width: 0 1px 1px 0;
    font-weight: normal;
    text-align: left;
    white-space: nowrap;
    overflow: hidden;
}
.grid th {
    height: 18px;
    background: #f0f0f0;
    border-color: #808080;
    box-shadow: inset 1px 1px #fff;
}
.grid td:first-child {
    background: #f0f0f0;
    border-color: #808080;
}
.grid td:nth-child(6) {
    text-align: right;
}
.current {
    width: 8px;
    height: 12px;
}
.grid .mark {
    padding: 0 5px;
}
.mark svg {
    width: 13px;
    height: 11px;
}
.grid .selected {
    background: #a0a0a0;
    color: #fff;
}
.grid .blue-text {
    color: #0000d0;
    font-weight: bold;
}
.grid .green-text {
    color: #007800;
    font-weight: bold;
}
.total td {
    background-color: #e5ffff;
}
.grid .total td:nth-child(6) {
    background-image: linear-gradient(45deg, transparent 50%, #0ca00c 50%);
    background-size: 6px 6px;
    background-position: right top;
    background-repeat: no-repeat;
}
.flat-scroll {
    width: 17px;
    display: flex;
    flex-direction: column;
    background: #f0f0f0;
    border-top: 1px solid #808080;
    color: #505050;
}
.flat-scroll button {
    height: 17px;
    display: flex;
    align-items: center;
    justify-content: center;
}
.flat-scroll svg {
    width: 9px;
    height: 7px;
}
.track {
    flex: 1;
    padding: 0 1px;
}
.track .thumb {
    display: block;
    height: 42%;
    background: #cdcdcd;
}

/* Status line */
.status {
    height: 27px;
    display: flex;
    gap: 2px;
    padding: 2px 0 1px 89px;
}
.cell {
    border: 1px solid;
    border-color: #a0a0a0 #fff #fff #a0a0a0;
}
.first {
    width: 300px;
}
.wide {
    flex: 1;
}
.lang {
    width: 34px;
    padding: 4px 0 0 1px;
    font: 12px/16px Lato, "Open Sans", sans-serif;
    background: repeating-linear-gradient(135deg, #f0f0f0 0 3px, #a0a0a0 3px 4px) right bottom / 12px 12px no-repeat;
}

/* Taskbar */
.taskbar {
    height: 40px;
    display: flex;
    background: #0a0808;
    color: #fff;
    font: 12px/17px Roboto, "Open Sans", sans-serif;
}
.system, .apps, .tray {
    display: flex;
}
.taskbar button {
    width: 48px;
    display: flex;
    align-items: center;
    justify-content: center;
}
.apps {
    gap: 1px;
    margin-left: 2px;
}
.open {
    background: linear-gradient(#76b9ed, #76b9ed) center bottom / 40px 2px no-repeat;
}
.current-app {
    background-color: #3d3c3c;
    background-size: 48px 2px;
}
.tray {
    margin-left: auto;
    align-items: center;
    gap: 8px;
}
.layout {
    margin-left: 2px;
}
.clock {
    margin: 0 1px 0 7px;
    display: flex;
    flex-direction: column;
    align-items: center;
}
.peek {
    width: 5px;
    height: 40px;
    border-left: 1px solid #555;
}
```
